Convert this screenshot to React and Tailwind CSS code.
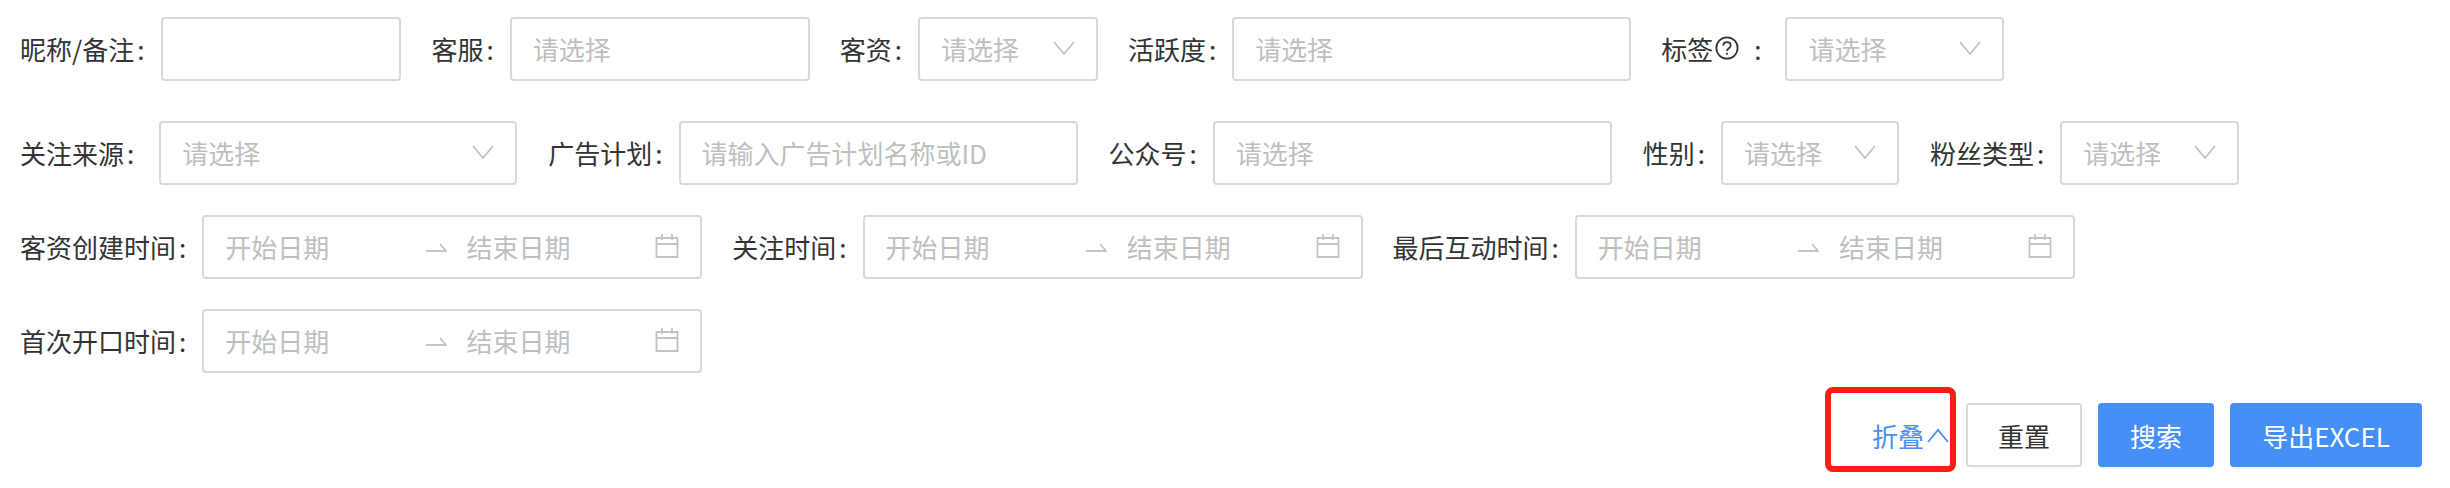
const FONT = 'font-["Noto_Sans_CJK_SC",sans-serif]';

function ChevronDown() {
  return (
    <svg className="shrink-0" width="22" height="14" viewBox="0 0 22 14" fill="none" stroke="#bfbfbf" strokeWidth="1.6">
      <path d="M1 1l10 12L21 1" />
    </svg>
  );
}

function CalendarIcon() {
  return (
    <svg className="shrink-0" width="24" height="24" viewBox="0 0 24 24" fill="none" stroke="#c4c4c4" strokeWidth="1.8">
      <path d="M1.5 4h21v19h-21zM1.5 10h21M7 0v6M17 0v6" />
    </svg>
  );
}

function SwapArrow() {
  return (
    <svg className="mt-[2px] shrink-0" width="21" height="9" viewBox="0 0 21 9" fill="none" stroke="#c4c4c4" strokeWidth="1.8">
      <path d="M0 8h20L14 1" />
    </svg>
  );
}

function HelpIcon() {
  return (
    <svg className="ml-[2px] shrink-0" width="24" height="24" viewBox="0 0 26 26" fill="none" stroke="#333" strokeWidth="1.9">
      <circle cx="13" cy="13" r="11.5" />
      <path d="M9 10.5c0-2.4 1.8-3.8 4-3.8s4 1.4 4 3.5c0 3-4 3-4 6" />
      <path d="M13 18.2v2.2" />
    </svg>
  );
}

function Label({ children }) {
  return (
    <span className="flex items-center whitespace-nowrap pb-[2px] text-[26px] text-[#333]">
      {children}
      <span className="ml-[3px] mr-[16px]">:</span>
    </span>
  );
}

function Box({ width, children }) {
  return (
    <div className={`flex h-[64px] items-center rounded-[4px] border-2 border-[#d9d9d9] bg-white px-[21px] pb-[2px] text-[26px] text-[#bfbfbf] ${width}`}>
      {children}
    </div>
  );
}

function Range() {
  return (
    <Box width="w-[500px]">
      <span className="w-[208px]">开始日期</span>
      <SwapArrow />
      <span className="ml-[20px] w-[196px]">结束日期</span>
      <CalendarIcon />
    </Box>
  );
}

function Select({ width }) {
  return (
    <Box width={width}>
      <span className="flex-1">请选择</span>
      <ChevronDown />
    </Box>
  );
}

export default function App() {
  return (
    <div className={`h-[488px] w-[2450px] bg-white pl-[20px] pr-[28px] pt-[17px] ${FONT}`}>
      <div className="flex items-center gap-[30px]">
        <div className="flex items-center gap-[1px]">
          <Label>昵称/备注</Label>
          <Box width="w-[240px]" />
        </div>
        <div className="flex items-center">
          <Label>客服</Label>
          <Box width="w-[300px]">请选择</Box>
        </div>
        <div className="flex items-center">
          <Label>客资</Label>
          <Select width="w-[180px]" />
        </div>
        <div className="flex items-center">
          <Label>活跃度</Label>
          <Box width="w-[399px]">请选择</Box>
        </div>
        <div className="flex items-center gap-[8px]">
          <Label>
            标签<HelpIcon />
            <span className="ml-[12px]" />
          </Label>
          <Select width="w-[219px]" />
        </div>
      </div>

      <div className="mt-[40px] flex items-center gap-[31px]">
        <div className="flex items-center gap-[9px]">
          <Label>关注来源</Label>
          <Select width="w-[358px]" />
        </div>
        <div className="flex items-center">
          <Label>广告计划</Label>
          <Box width="w-[399px]">请输入广告计划名称或ID</Box>
        </div>
        <div className="flex items-center">
          <Label>公众号</Label>
          <Box width="w-[399px]">请选择</Box>
        </div>
        <div className="flex items-center">
          <Label>性别</Label>
          <Select width="w-[178px]" />
        </div>
        <div className="flex items-center">
          <Label>粉丝类型</Label>
          <Select width="w-[179px]" />
        </div>
      </div>

      <div className="mt-[30px] flex items-center gap-[30px]">
        <div className="flex items-center">
          <Label>客资创建时间</Label>
          <Range />
        </div>
        <div className="flex items-center">
          <Label>关注时间</Label>
          <Range />
        </div>
        <div className="flex items-center">
          <Label>最后互动时间</Label>
          <Range />
        </div>
      </div>

      <div className="mt-[30px] flex items-center">
        <Label>首次开口时间</Label>
        <Range />
      </div>

      <div className="mt-[30px] flex items-center justify-end gap-[16px]">
        <div className="relative flex h-[64px] items-center gap-[3px] pr-[1px] text-[26px] text-[#468ff7]">
          折叠
          <svg width="22" height="15" viewBox="0 0 22 15" fill="none" stroke="#468ff7" strokeWidth="1.8">
            <path d="M1 14L11 2l10 12" />
          </svg>
          <div className="absolute -left-[47px] -right-[6px] -top-[16px] -bottom-[5px] rounded-[8px] border-[6px] border-[#fb1c13]" />
        </div>
        <button className="h-[64px] w-[116px] rounded-[4px] border-2 border-[#d9d9d9] bg-white text-[26px] text-[#333] shadow-[0_2px_0_rgba(0,0,0,0.02)]">重置</button>
        <button className="h-[64px] w-[116px] rounded-[4px] bg-[#468ff7] text-[26px] text-white shadow-[0_2px_0_rgba(0,0,0,0.045)]">搜索</button>
        <button className="h-[64px] w-[192px] rounded-[4px] bg-[#468ff7] text-[26px] text-white shadow-[0_2px_0_rgba(0,0,0,0.045)]">导出EXCEL</button>
      </div>
    </div>
  );
}
